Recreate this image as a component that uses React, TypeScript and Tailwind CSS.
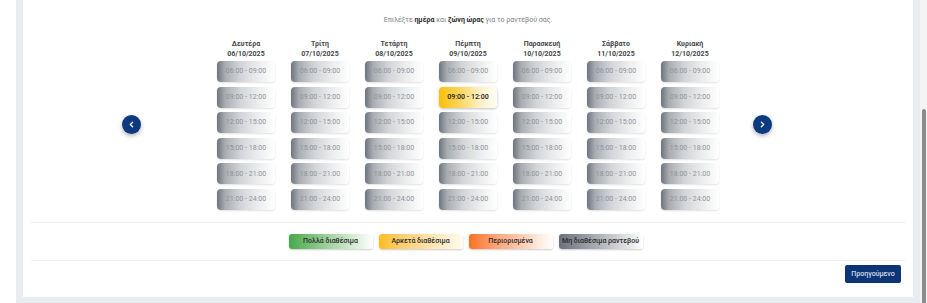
import { ChevronLeft, ChevronRight } from "lucide-react"

const days = [
	{ name: "Δευτέρα", date: "06/10/2025" },
	{ name: "Τρίτη", date: "07/10/2025" },
	{ name: "Τετάρτη", date: "08/10/2025" },
	{ name: "Πέμπτη", date: "09/10/2025" },
	{ name: "Παρασκευή", date: "10/10/2025" },
	{ name: "Σάββατο", date: "11/10/2025" },
	{ name: "Κυριακή", date: "12/10/2025" },
]

const slots = ["06:00 - 09:00", "09:00 - 12:00", "12:00 - 15:00", "15:00 - 18:00", "18:00 - 21:00", "21:00 - 24:00"]

const legend = [
	{ label: "Πολλά διαθέσιμα", cls: "from-[#45a849] to-white" },
	{ label: "Αρκετά διαθέσιμα", cls: "from-[#fbbd14] to-[#fffbf0]" },
	{ label: "Περιορισμένα", cls: "from-[#f8721a] to-white" },
	{ label: "Μη διαθέσιμα ραντεβού", cls: "from-[#6b717b] to-white" },
]

export default function App() {
	return (
		<div className="flex h-[303px] w-[927px] overflow-hidden bg-white font-['Roboto',sans-serif]">
			<div className="flex h-full w-[920px] pl-4">
				<div className="flex h-full flex-1 bg-[#e9edf2] px-[7px] pb-[6px]">
					<div className="flex flex-1 flex-col bg-white px-2">
						{/* инструкция */}
						<p className="mt-[16px] text-center text-[7px] leading-[8px] text-[#7a7f87]">
							Επιλέξτε <b className="font-bold text-[#2a2a2a]">ημέρα</b> και{" "}
							<b className="font-bold text-[#2a2a2a]">ζώνη ώρας</b> για το ραντεβού σας.
						</p>

						<div className="mt-[15px] flex items-center justify-center pr-[42px]">
							<button className="flex h-[19px] w-[19px] items-center justify-center rounded-full bg-[#0c3a80] text-white shadow-[0_2px_4px_rgba(0,0,0,0.3)]">
								<ChevronLeft size={9} strokeWidth={3.5} />
							</button>

							<div className="ml-[76px] mr-[34px] grid grid-cols-7 gap-x-4">
								{days.map(day => (
									<div key={day.date} className="flex w-[58px] flex-col items-center">
										<div className="text-center text-[7px] font-bold leading-[10px] text-[#45474c]">
											<div>{day.name}</div>
											<div>{day.date}</div>
										</div>
										<div className="mt-[2px] flex w-full flex-col gap-[4.6px]">
											{slots.map(slot => {
												const selected = day.date === "09/10/2025" && slot === "09:00 - 12:00"
												return (
													<div
														key={slot}
														className={
															selected
																? "flex h-[21px] items-center justify-center rounded-[4px] bg-[linear-gradient(to_right,#f8bf0c_0%,#fbd55a_35%,#fdf0c6_70%,#fffdf6_100%)] text-[7px] font-medium text-[#1a1a1a] shadow-[0_1px_3px_rgba(0,0,0,0.25)]"
																: "flex h-[21px] items-center justify-center rounded-[4px] bg-[linear-gradient(to_right,#6e747d_0%,#a9adb2_14%,#d2d4d7_40%,#ebeced_70%,#ffffff_100%)] text-[7px] text-[#8f9399] shadow-[0_1px_2px_rgba(0,0,0,0.12)]"
														}
													>
														{slot}
													</div>
												)
											})}
										</div>
									</div>
								))}
							</div>

							<button className="flex h-[19px] w-[19px] items-center justify-center rounded-full bg-[#0c3a80] text-white shadow-[0_2px_4px_rgba(0,0,0,0.3)]">
								<ChevronRight size={9} strokeWidth={3.5} />
							</button>
						</div>

						<div className="mt-[12px] h-px bg-[#eceef1]" />

						<div className="flex h-[37px] items-center justify-center gap-[6px] pr-[5px]">
							{legend.map(item => (
								<div
									key={item.label}
									className={`flex h-[15px] w-[84px] items-center justify-center rounded-[3px] bg-linear-to-r ${item.cls} text-[7px] font-medium text-[#2b2b2b] shadow-[0_1px_2px_rgba(0,0,0,0.2)]`}
								>
									{item.label}
								</div>
							))}
						</div>

						<div className="h-px bg-[#eceef1]" />

						<div className="flex justify-end pr-1 pt-[4px]">
							<button className="flex h-[18px] w-[56px] items-center justify-center rounded-[2px] bg-[#0b3577] text-[7px] text-white">
								Προηγούμενο
							</button>
						</div>
					</div>
				</div>
			</div>

			{/* полоса прокрутки */}
			<div className="flex h-full w-[7px] flex-col bg-[#f4f4f4] pt-[109px]">
				<div className="mx-auto h-full w-[4px] rounded-t-full bg-[#8c8c8c]" />
			</div>
		</div>
	)
}
